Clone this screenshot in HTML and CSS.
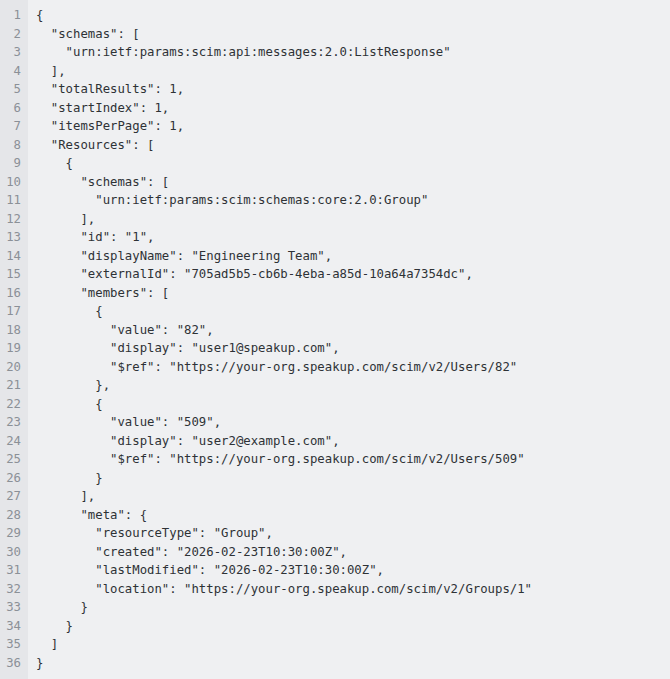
FILE: index.html
```html
<!DOCTYPE html>
<html>
<head>
<meta charset="utf-8">
<link rel="stylesheet" href="styles.css">
</head>
<body>
<div class="code">
<div class="gutter">1<br>2<br>3<br>4<br>5<br>6<br>7<br>8<br>9<br>10<br>11<br>12<br>13<br>14<br>15<br>16<br>17<br>18<br>19<br>20<br>21<br>22<br>23<br>24<br>25<br>26<br>27<br>28<br>29<br>30<br>31<br>32<br>33<br>34<br>35<br>36</div>
<pre class="src">{
  "schemas": [
    "urn:ietf:params:scim:api:messages:2.0:ListResponse"
  ],
  "totalResults": 1,
  "startIndex": 1,
  "itemsPerPage": 1,
  "Resources": [
    {
      "schemas": [
        "urn:ietf:params:scim:schemas:core:2.0:Group"
      ],
      "id": "1",
      "displayName": "Engineering Team",
      "externalId": "705ad5b5-cb6b-4eba-a85d-10a64a7354dc",
      "members": [
        {
          "value": "82",
          "display": "user1@speakup.com",
          "$ref": "https://your-org.speakup.com/scim/v2/Users/82"
        },
        {
          "value": "509",
          "display": "user2@example.com",
          "$ref": "https://your-org.speakup.com/scim/v2/Users/509"
        }
      ],
      "meta": {
        "resourceType": "Group",
        "created": "2026-02-23T10:30:00Z",
        "lastModified": "2026-02-23T10:30:00Z",
        "location": "https://your-org.speakup.com/scim/v2/Groups/1"
      }
    }
  ]
}</pre>
</div>
</body>
</html>
```
FILE: styles.css
```css
html, body {
  margin: 0;
  padding: 0;
  background: #eff0f2;
}
.code {
  display: flex;
  min-height: 679px;
  background: #eff0f2;
  font-family: "DejaVu Sans Mono", monospace;
  font-size: 12.3px;
  line-height: 18.5px;
}
.gutter {
  width: 28px;
  box-sizing: border-box;
  background: #e5e6e9;
  color: #8b9097;
  text-align: right;
  padding: 6px 7px 0 0;
}
.src {
  margin: 0;
  padding: 6px 0 0 8px;
  font: inherit;
  color: #2e3236;
}
```
